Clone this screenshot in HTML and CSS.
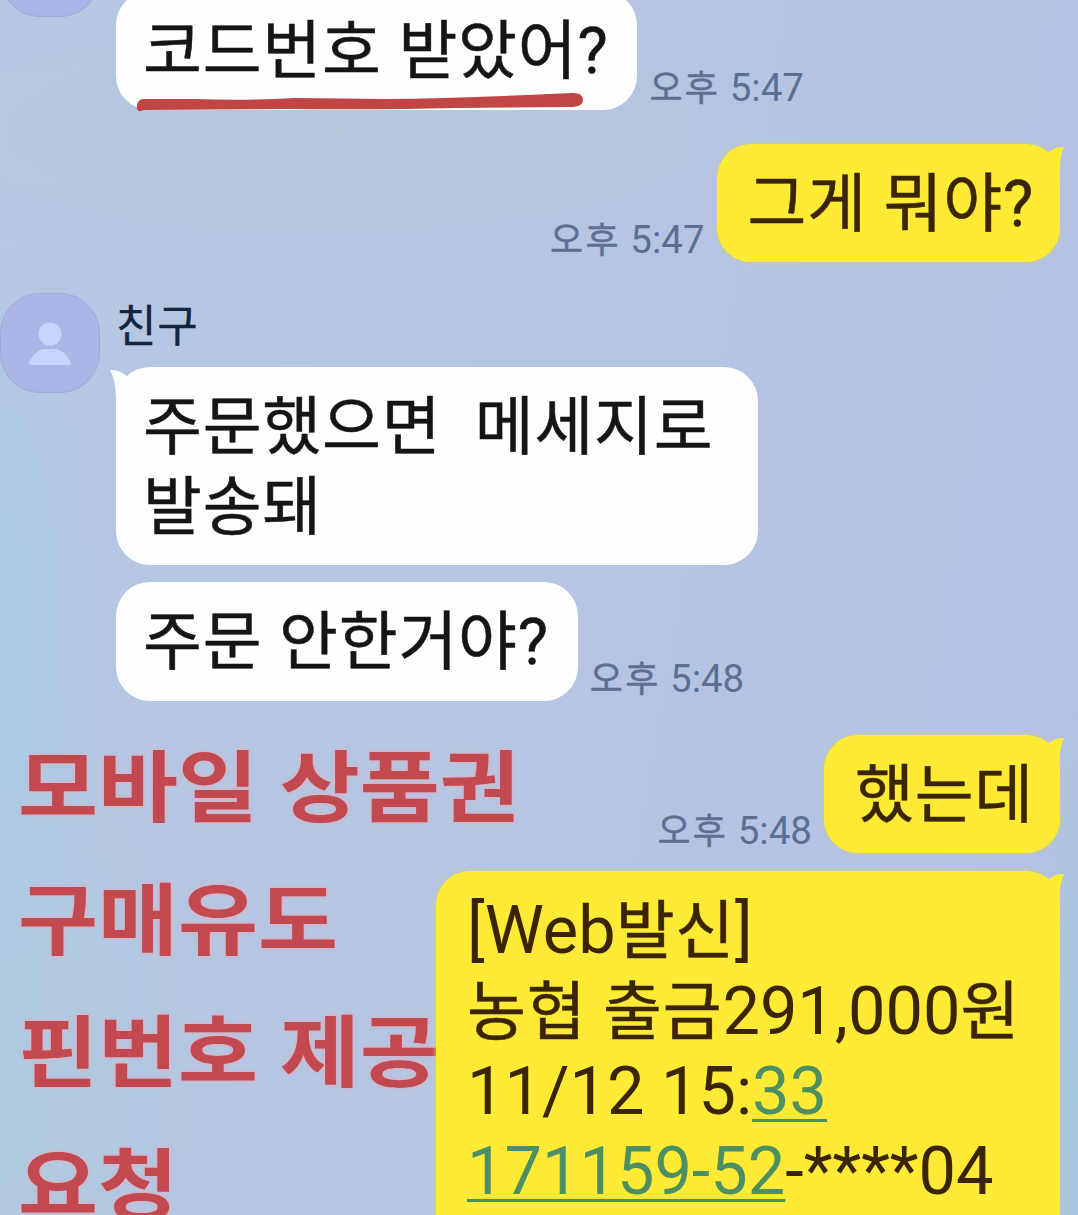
FILE: index.html
```html
<!DOCTYPE html>
<html lang="ko">
<head>
    <meta charset="UTF-8">
    <meta name="viewport" content="width=device-width, initial-scale=1.0">
    <title>채팅</title>
    <link rel="stylesheet" href="styles.css">
</head>
<body>
    <main class="chat">
        <div class="note">모바일 상품권<br>구매유도<br>핀번호 제공<br>요청</div>

        <section class="group group-first">
            <div class="avatar"></div>
            <div class="messages">
                <div class="name"></div>
                <div class="row">
                    <div class="bubble">코드번호 받았어?
                        <svg class="underline" width="450" height="22" viewBox="0 0 450 22">
                            <path d="M2 19 Q1 10 8 9 L60 9 Q110 11 160 8 L250 9 Q330 8 436 3 Q448 2 448 10 Q448 16 438 17 L320 18 Q250 20 150 19 L8 20 Q4 23 2 19Z" fill="#c24545"/>
                        </svg>
                    </div>
                    <span class="time"><span class="ampm">오후</span> 5:47</span>
                </div>
            </div>
        </section>

        <div class="row mine">
            <span class="time"><span class="ampm">오후</span> 5:47</span>
            <div class="bubble">그게 뭐야?
                <svg class="tail" width="26" height="32" viewBox="0 0 26 32"><path d="M26 3 Q18 2 9 9 L6 20 L22 32 Q21 14 26 3Z"/></svg>
            </div>
        </div>

        <section class="group">
            <div class="avatar">
                <svg width="44" height="44" viewBox="0 0 44 44">
                    <circle cx="22" cy="12" r="11.5"/>
                    <path d="M1 41 Q3 35 9 30 Q13 27 17 27 H27 Q31 27 35 30 Q41 35 43 41 Q43 43 41 43 H3 Q1 43 1 41Z"/>
                </svg>
            </div>
            <div class="messages">
                <div class="name">친구</div>
                <div class="row">
                    <div class="bubble wide">주문했으면&nbsp; 메세지로<br>발송돼
                        <svg class="tail" width="26" height="32" viewBox="0 0 26 32"><path d="M0 3 Q8 2 17 9 L20 20 L6 32 Q6 14 0 3Z"/></svg>
                    </div>
                </div>
                <div class="row">
                    <div class="bubble">주문 안한거야?</div>
                    <span class="time"><span class="ampm">오후</span> 5:48</span>
                </div>
            </div>
        </section>

        <div class="row mine">
            <span class="time"><span class="ampm">오후</span> 5:48</span>
            <div class="bubble">했는데
                <svg class="tail" width="26" height="32" viewBox="0 0 26 32"><path d="M26 3 Q18 2 9 9 L6 20 L22 32 Q21 14 26 3Z"/></svg>
            </div>
        </div>

        <div class="row mine">
            <div class="bubble sms">[Web<span class="ko">발신</span>]<br><span class="ko">농협 출금</span>291,000<span class="ko">원</span><br>11/12 15:<span class="link">33</span><br><span class="link">171159-52</span>-****04
                <svg class="tail" width="26" height="32" viewBox="0 0 26 32"><path d="M26 3 Q18 2 9 9 L6 20 L22 32 Q21 14 26 3Z"/></svg>
            </div>
        </div>
    </main>
</body>
</html>
```
FILE: styles.css
```css
* {
    box-sizing: border-box;
}

body {
    margin: 0;
    font-family: Roboto, "Noto Sans CJK KR", sans-serif;
}

.chat {
    position: relative;
    height: 1215px;
    overflow: hidden;
    display: flex;
    flex-direction: column;
    background:
        radial-gradient(ellipse 110px 420px at 0 640px, #a9cbe4, rgba(169, 203, 228, 0)),
        radial-gradient(ellipse 240px 420px at 0 1080px, #aecae0, rgba(174, 202, 224, 0)),
        radial-gradient(ellipse 50px 450px at 1078px 1100px, #a4c8dc, rgba(164, 200, 220, 0)),
        radial-gradient(ellipse 420px 110px at 340px 130px, #b3c9da, rgba(179, 201, 218, 0)),
        linear-gradient(100deg, #b6c7e3, #b5c5e2 50%, #b5c0e5);
}

.group {
    display: flex;
    gap: 16px;
    margin: 31px 0 34px;
}

.group-first {
    margin: -83px 0 34px;
}

.avatar {
    width: 100px;
    height: 100px;
    flex-shrink: 0;
    display: flex;
    align-items: center;
    justify-content: center;
    border: 1px solid #9fa9d8;
    border-radius: 40px;
    background: #abb5e8;
}

.avatar svg {
    fill: #c6d5fd;
    margin-top: 1px;
}

.name {
    height: 74px;
    font-size: 44px;
    line-height: 68px;
    letter-spacing: 0.8px;
    color: #142540;
    -webkit-text-stroke: 0.3px;
}

.row {
    display: flex;
    align-items: flex-end;
    gap: 12px;
}

.row + .row {
    margin-top: 18px;
}

.group .row + .row {
    margin-top: 17px;
}

.mine {
    justify-content: flex-end;
    padding-right: 18px;
}

.bubble {
    position: relative;
    padding: 21px 29px 18px 27px;
    border-radius: 34px;
    background: #fefefe;
    font-size: 64px;
    line-height: 79.5px;
    letter-spacing: 0.8px;
    color: #161414;
    white-space: nowrap;
    -webkit-text-stroke: 0.5px;
}

.mine .bubble {
    padding-left: 31px;
    padding-right: 26px;
    background: #ffeb36;
    color: #3a2500;
    box-shadow: 0 0 5px #c9cf8c;
}

.wide {
    width: 642px;
}

.mine .sms {
    width: 624px;
    padding: 20px 28px 60px 31px;
    font-size: 66.7px;
    letter-spacing: 0;
    -webkit-text-stroke: 0;
}

.ko {
    font-size: 64px;
    letter-spacing: 0.8px;
    -webkit-text-stroke: 0.5px;
}

.tail {
    position: absolute;
    top: 0;
    left: -6px;
    fill: #fefefe;
}

.mine .tail {
    left: auto;
    right: -4px;
    fill: #ffeb36;
}

.underline {
    position: absolute;
    left: 19px;
    bottom: -2px;
}

.time {
    font-size: 38.5px;
    line-height: 41px;
    color: #5c6f91;
    white-space: nowrap;
}

.ampm {
    font-size: 36px;
    letter-spacing: 2.2px;
    -webkit-text-stroke: 0.4px;
}

.link {
    color: #4b8f62;
    text-decoration: underline;
    text-decoration-thickness: 3px;
    text-underline-offset: 5px;
}

/* red caption, sits under the bubbles */
.note {
    position: absolute;
    left: 18px;
    top: 723px;
    font-size: 87px;
    font-weight: 700;
    line-height: 147.5px;
    color: #c34950;
    text-shadow: 0 0 4px #f5a3ae;
    white-space: nowrap;
    transform: scaleY(0.9);
    transform-origin: 0 0;
}
```
